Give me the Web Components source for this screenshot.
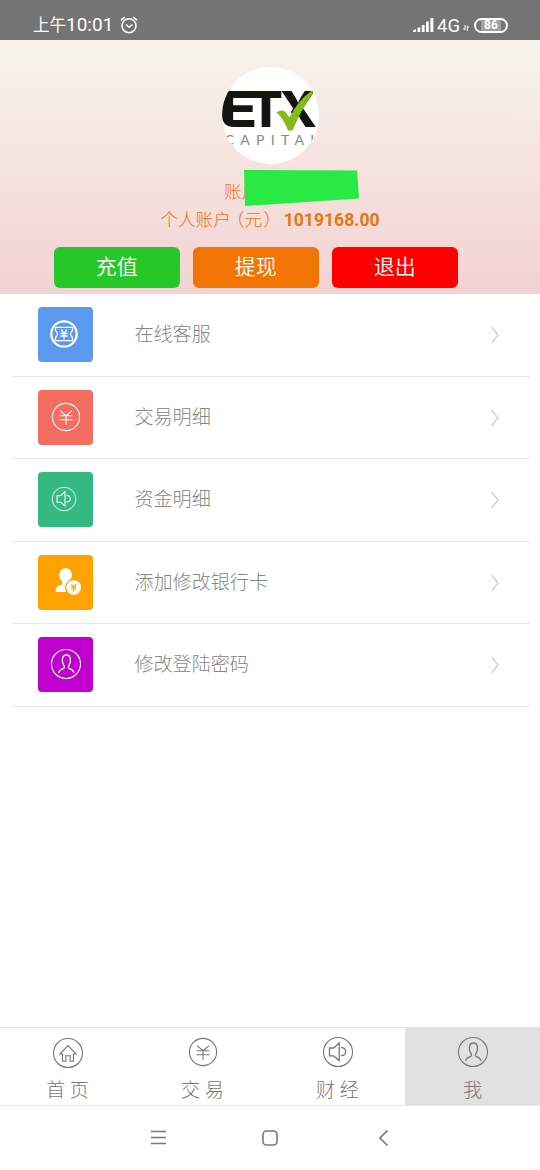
<!DOCTYPE html>
<html lang="zh-CN">
<head>
<meta charset="utf-8">
<title>ETX Capital</title>
<style>
html,body{margin:0;background:#fff}
body{font-family:Roboto,"Noto Sans CJK SC",sans-serif;font-weight:300}
</style>
</head>
<body>
<account-app></account-app>
<script>
const define = (name, html) => customElements.define(name, class extends HTMLElement {
  constructor() {
    super();
    const t = document.createElement('template');
    t.innerHTML = html;
    this.attachShadow({mode: 'open'}).append(t.content.cloneNode(true));
  }
});

const ICONS = {
  ticket: `<circle cx="16" cy="16" r="12.7" stroke-width="2.2"/><path stroke-width="1.3" d="M7.500 9.300h17v3.200q-4 3.500 0 7v3.200h-17v-3.200q4-3.500 0-7zM13 11.500l3 3.700 3-3.700M12.500 15.500h7M12.500 18h7M16 15v6"/>`,
  yen: `<circle cx="16" cy="16" r="13.6"/><path d="M10 9.700l6 5 6-5M9.500 14.700h13M9.500 18.700h13M16 14.700v9"/>`,
  sound: `<circle cx="16" cy="16" r="14.5"/><path stroke-width="1.3" d="M7.500 12h4.200l5.500-5v17.500l-5.500-4.600H7.500zM19 11.700c6.300-.6 6.300 8.500 0 8M17.200 11v10"/>`,
  user: `<circle cx="16" cy="16" r="14.5"/><path stroke-width="1.3" d="M8.700 25c.5-3.300 3-3.600 5-4.600 1.300-.7.600-2.300-.3-3.700-1.600-2.600-2-9.700 3-9.700s4.600 7.100 3 9.700c-.9 1.400-1.600 3-.3 3.700 2 1 4.400 1.300 4.800 4.600"/>`,
  home: `<circle cx="16" cy="16" r="14.5"/><path stroke-width="1.1" d="M8 17l8-8.500 8 8.500h-2.600v7.300h-3.300v-5.600h-4.300v5.600h-3.300V17z"/>`,
  member: `<g stroke="none" fill="currentColor"><ellipse cx="14.5" cy="9.200" rx="6.400" ry="7.200"/><path d="M11 13h7v5l4 8H4.800c-.5-5 1.200-6.200 6.200-7.600z"/></g><circle cx="22.700" cy="21.500" r="8" fill="currentColor" stroke="#ffa200" stroke-width="1.3"/><path stroke="#ffa200" d="M20.200 17.800l2.500 3.200 2.500-3.200M20 21h5.400M20 23h5.400M22.700 21v4.700"/>`
};
customElements.define('line-icon', class extends HTMLElement {
  constructor() { super(); this.attachShadow({mode: 'open'}); }
  connectedCallback() {
    this.shadowRoot.innerHTML = `<style>:host{display:block;width:32px;height:32px}svg{display:block;width:100%;height:100%;overflow:visible}</style>
    <svg viewBox="0 0 32 32" fill="none" stroke="currentColor" stroke-width="1.1">${ICONS[this.getAttribute('name')]}</svg>`;
  }
});

define('status-bar', `<style>
:host{display:flex;height:40px;background:#747474;color:#fff;align-items:center;padding:10px 32px 0 33px;box-sizing:border-box;font-weight:400}
.time{font-size:19px;line-height:30px;white-space:nowrap;width:78px;padding-top:1px}
.time b{font-weight:400;font-size:16.500px}
.alarm{margin-left:9px}.net{font-size:18.500px;margin-left:3px;width:26px;padding-top:1px}
.sig{margin-left:auto}.arr{margin-top:6px}
.bat{margin-left:5px;box-sizing:border-box;width:34px;height:15px;border:2px solid #fff;border-radius:8px;display:flex;align-items:center;justify-content:center;font-size:12px;font-weight:700;background:linear-gradient(90deg,#747474 15%,#a2a2a2 15% 83%,#747474 83%);line-height:12px}
svg{display:block}
</style>
<span class="time"><b>上午</b>10:01</span>
<svg class="alarm" width="18" height="18" viewBox="0 0 18 18" fill="none" stroke="#fff" stroke-width="1.5"><circle cx="9" cy="9.700" r="7"/><path d="M1 4.200l3.700-3M17 4.200l-3.700-3M6 8.500l3 2.800 3.500-2.800"/></svg>
<svg class="sig" width="21" height="16" viewBox="0 0 21 16" fill="#fff"><path d="M0 15v-1.500l3-1.500v3zM4.500 10.500h2.800V15H4.500zM8.800 8h2.800v7H8.800zM13 4.500h2.800V15H13zM17.400 1h3v14h-3z"/></svg>
<span class="net">4G</span>
<svg class="arr" width="6" height="8" viewBox="0 0 6 8" fill="none" stroke="#fff"><path d="M2 1v5L0 4.500M4.300 7V2L6 3.500"/></svg>
<span class="bat">86</span>`);

define('brand-logo', `<style>
:host{display:block;width:97px;height:97px;border-radius:50%;background:#fff;overflow:hidden}
svg{display:block}text{font-family:Inter,sans-serif}
</style>
<svg width="97" height="97" viewBox="0 0 97 97">
<defs><clipPath id="e"><path d="M11 23.500H40V60H12Q0 60 0 48V34.500Q0 23.500 11 23.500"/></clipPath>
<clipPath id="x"><path d="M55 20H98V62H77L69 45 55 33z"/></clipPath></defs>
<g fill="#14150f" font-weight="800" font-size="49.500">
<text x="-3.500" y="59.700" textLength="39" lengthAdjust="spacingAndGlyphs" clip-path="url(#e)">E</text>
<text x="27" y="59.700" textLength="34" lengthAdjust="spacingAndGlyphs">T</text>
<text x="57" y="59.700" textLength="38" lengthAdjust="spacingAndGlyphs" clip-path="url(#x)">X</text></g>
<path d="M54.500 45.500Q59 42 63 44.500L67.500 50.500Q76 33 90 23.500L91.500 25Q79 43 70.500 63.500H66Q62 52 54.500 45.500" fill="#80bd18"/>
<text x="2.500" y="77.500" font-size="14" font-weight="400" fill="#888" textLength="93" style="font-family:Lato,sans-serif">CAPITAL</text>
</svg>`);

define('action-button', `<style>
:host{display:flex;align-items:center;justify-content:center;width:125.500px;height:41.500px;border-radius:6px;background:var(--fill);color:#fff;font-size:21px;line-height:30px;box-sizing:border-box;font-weight:350}
</style><slot></slot>`);

define('account-header', `<style>
:host{display:flex;flex-direction:column;align-items:center;height:254px;box-sizing:border-box;padding-top:27px;background:linear-gradient(#f8f4ed,#f2d2d2);color:#ea750c;font-size:17.600px}
.name{position:relative;width:92px;line-height:28px;margin-top:14px;height:28px}
.mask{position:absolute;left:20px;top:-8px}
.balance{line-height:28px;height:28px;white-space:nowrap}.balance b{font-weight:700}
.open{margin-left:-4px}.close{margin:0 2.500px 0 1.500px}
.actions{display:flex;gap:13.500px;margin-top:12.500px;align-self:flex-start;margin-left:54px}
</style>
<brand-logo></brand-logo>
<div class="name">账户<svg class="mask" width="116" height="38"><path d="M0 0L113 .5 115 28.500 1 36z" fill="#29e944"/></svg></div>
<div class="balance">个人账户<span class="open">（</span>元<span class="close">）</span><b>1019168.00</b></div>
<div class="actions"><action-button style="--fill:#28c728">充值</action-button><action-button style="--fill:#f27405">提现</action-button><action-button style="--fill:#fe0000">退出</action-button></div>`);

define('menu-row', `<style>
:host{display:flex;align-items:center;height:82.500px;box-sizing:border-box;margin:0 10px 0 12px;padding:0 31px 0 26.400px;border-bottom:1.500px solid #e6e6e6;color:#858585;font-size:19.100px}
.tile{width:55px;height:55px;border-radius:4px;background:var(--tile);color:#fff;display:flex;align-items:center;justify-content:center;margin-right:41px;flex:none}
::slotted(line-icon){margin-top:-1px}
.label{flex:1;line-height:28px;padding-top:1px}
svg{display:block;margin-top:1px}
</style><span class="tile"><slot name="icon"></slot></span><span class="label"><slot></slot></span>
<svg width="9" height="18" viewBox="0 0 9 18" fill="none" stroke="#cecece" stroke-width="1.300"><path d="M1.500 1l6.500 8-6.500 8"/></svg>`);

define('tab-item', `<style>
:host{display:flex;flex-direction:column;align-items:center;width:135px;box-sizing:border-box;padding-top:7.500px;color:#777;font-size:19.200px;background:var(--tab,transparent)}
.label{line-height:28px;margin-top:9px;white-space:pre}
</style><slot name="icon"></slot><span class="label"><slot></slot></span>`);

define('tab-bar', `<style>:host{display:flex;height:79px;box-sizing:border-box;border-top:1px solid #e2e2e2;border-bottom:1px solid #e8e8e8}</style><slot></slot>`);

define('system-nav', `<style>:host{display:flex;height:64px;align-items:center;justify-content:center;gap:96px}svg{display:block}</style>
<svg width="16" height="16" viewBox="0 0 16 16" fill="none" stroke="#777" stroke-width="1.400"><path d="M1 1.500h15M1 7.500h15M1 13.500h15"/></svg>
<svg width="16" height="16" viewBox="0 0 16 16" fill="none" stroke="#777" stroke-width="1.600"><rect x="1" y="1" width="14" height="14" rx="3.500"/></svg>
<svg width="16" height="16" viewBox="0 0 16 16" fill="none" stroke="#777" stroke-width="1.600"><path d="M13.500 .5L6 8l7.500 7.500"/></svg>`);

define('account-app', `<style>
:host{display:flex;flex-direction:column;width:540px;height:1170px;background:#fff;overflow:hidden}
main{flex:1}
.small{width:26px;height:26px;margin-right:3px}
.left{margin-right:3px}
.member{margin-left:3px}
</style>
<status-bar></status-bar>
<account-header></account-header>
<main>
<menu-row style="--tile:#5b9aee"><line-icon slot="icon" name="ticket" class="left"></line-icon>在线客服</menu-row>
<menu-row style="--tile:#f46d60"><line-icon slot="icon" name="yen"></line-icon>交易明细</menu-row>
<menu-row style="--tile:#34b982"><line-icon slot="icon" name="sound" class="small"></line-icon>资金明细</menu-row>
<menu-row style="--tile:#ffa200"><line-icon slot="icon" name="member" class="member"></line-icon>添加修改银行卡</menu-row>
<menu-row style="--tile:#c000ce"><line-icon slot="icon" name="user"></line-icon>修改登陆密码</menu-row>
</main>
<tab-bar>
<tab-item><line-icon slot="icon" name="home" style="position:relative;top:1.500px"></line-icon>首 页</tab-item>
<tab-item><line-icon slot="icon" name="yen"></line-icon>交 易</tab-item>
<tab-item><line-icon slot="icon" name="sound"></line-icon>财 经</tab-item>
<tab-item style="--tab:#e1e1e1"><line-icon slot="icon" name="user"></line-icon>我</tab-item>
</tab-bar>
<system-nav></system-nav>`);
</script>
</body>
</html>
